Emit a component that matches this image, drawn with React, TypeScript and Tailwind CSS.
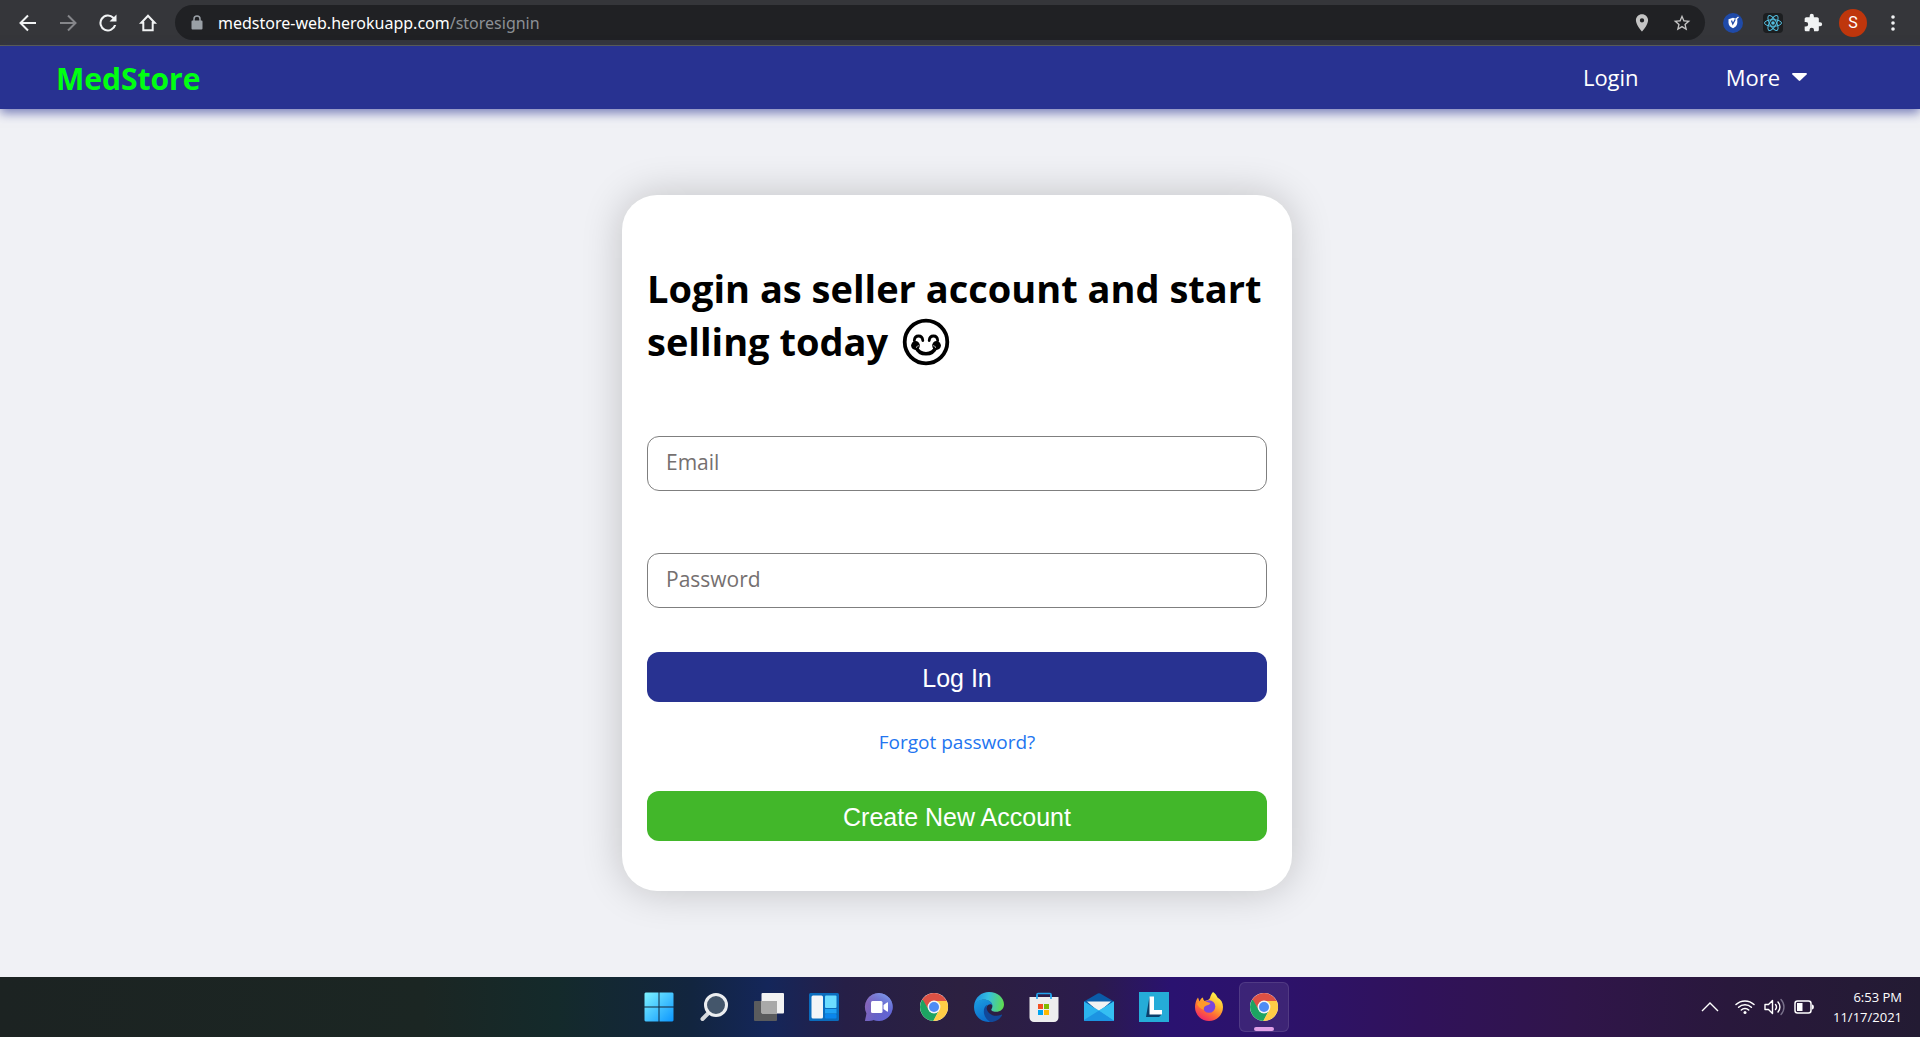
import React from "react";

const SANS = "font-['Open_Sans','Noto_Sans',sans-serif]";

function Toolbar() {
  return (
    <header className="flex h-[46px] items-center border-b border-[#5f6150] bg-[#35363a] pr-[17px] pl-4 text-[#f1f3f4]">
      <nav className="flex items-center gap-2" aria-label="Browser">
        <button aria-label="Back" className="flex w-8 justify-center pr-2">
          <svg width="24" height="24" viewBox="0 0 24 24" className="shrink-0" fill="none" stroke="currentColor" strokeWidth="2">
            <path d="M20 12H5M12 4.500 4.500 12l7.500 7.500" />
          </svg>
        </button>
        <button aria-label="Forward" className="flex w-8 justify-center pr-2 text-[#85868a]">
          <svg width="24" height="24" viewBox="0 0 24 24" className="shrink-0" fill="none" stroke="currentColor" strokeWidth="2">
            <path d="M4 12h15M12 4.500l7.500 7.500-7.500 7.500" />
          </svg>
        </button>
        <button aria-label="Reload" className="flex w-8 justify-center pr-2">
          <svg width="24" height="24" viewBox="0 0 24 24" className="shrink-0" fill="currentColor">
            <path d="M18 6A8.500 8.500 0 1 0 20.200 14h-2.200A6.400 6.400 0 1 1 16.500 7.500L13.500 10.500h7V3.500z" />
          </svg>
        </button>
        <button aria-label="Home" className="flex w-8 justify-center pr-2">
          <svg width="24" height="24" viewBox="0 0 24 24" className="shrink-0" fill="none" stroke="currentColor" strokeWidth="2">
            <path d="M12 4.800 5.300 11.800H7.300V19.200H16.700V11.800H18.700Z" />
          </svg>
        </button>
      </nav>
      <div className="ml-[7px] flex h-[35px] flex-1 items-center rounded-full bg-[#202124] pr-[13px] pl-4">
        <svg width="12" height="16" viewBox="0 0 12 16" className="shrink-0" fill="#9aa0a6">
          <path d="M1.500 5.500h9A1 1 0 0 1 11.500 6.500v7a1 1 0 0 1-1 1h-9a1 1 0 0 1-1-1v-7a1 1 0 0 1 1-1z" />
          <path d="M3 6V4a3 3 0 0 1 6 0v2" fill="none" stroke="#9aa0a6" strokeWidth="1.500" />
        </svg>
        <p className="ml-[15px] flex-1 font-['Noto_Sans','Open_Sans',sans-serif] text-[16px] leading-6 text-white">
          medstore-web.herokuapp.com<span className="text-[#8c9095]">/storesignin</span>
        </p>
        <div className="flex items-center gap-5 text-[#c4c4c4]">
          <button aria-label="Location">
            <svg width="20" height="20" viewBox="0 0 24 24" fill="currentColor">
              <path fillRule="evenodd" d="M12 1.500C7.900 1.500 4.700 4.700 4.700 8.800 4.700 14.300 12 22.500 12 22.500s7.300-8.200 7.300-13.700C19.300 4.700 16.100 1.500 12 1.500zm0 4.700a2.600 2.600 0 1 1 0 5.200 2.600 2.600 0 0 1 0-5.200z" />
            </svg>
          </button>
          <button aria-label="Bookmark">
            <svg width="20" height="20" viewBox="0 0 24 24" fill="currentColor">
              <path d="M22 9.240l-7.190-.62L12 2 9.190 8.630 2 9.240l5.460 4.730L5.820 21 12 17.270 18.180 21l-1.630-7.030L22 9.240zM12 15.400l-3.760 2.270 1-4.280-3.320-2.880 4.380-.38L12 6.100l1.710 4.040 4.380.38-3.320 2.880 1 4.280L12 15.400z" />
            </svg>
          </button>
        </div>
      </div>
      <div className="ml-[18px] flex items-center">
        <button aria-label="Shield">
          <svg width="20" height="20" viewBox="0 0 20 20">
            <circle cx="10" cy="10" r="10" fill="#1f4aa8" />
            <path d="M5.500 6.200 10 4.800l4.300 1.400v3.600c0 2.700-2 4.500-4.300 5.500-2.500-1-4.500-2.800-4.500-5.500z" fill="#fff" />
            <path d="M8.500 7.500l1.300 3.500L12.500 6" fill="none" stroke="#1f4aa8" strokeWidth="1.300" />
            <path d="M12.500 6.500 15.500 4" stroke="#fff" strokeWidth="1.200" />
          </svg>
        </button>
        <button aria-label="React tools" className="ml-5 rounded-sm bg-[#1c1e20]">
          <svg width="20" height="20" viewBox="0 0 20 20" fill="none" stroke="#53bfe0" strokeWidth="1">
            <circle cx="10" cy="10" r="1.800" fill="#53bfe0" stroke="none" />
            <ellipse cx="10" cy="10" rx="8.500" ry="3.300" />
            <ellipse cx="10" cy="10" rx="8.500" ry="3.300" transform="rotate(60 10 10)" />
            <ellipse cx="10" cy="10" rx="8.500" ry="3.300" transform="rotate(120 10 10)" />
          </svg>
        </button>
        <button aria-label="Extensions" className="ml-5">
          <svg width="20" height="20" viewBox="0 0 24 24" fill="currentColor">
            <path d="M20.500 11H19V7c0-1.100-.9-2-2-2h-4V3.500a2.500 2.500 0 0 0-5 0V5H4c-1.100 0-2 .9-2 2v3.800h1.500a2.700 2.700 0 0 1 0 5.400H2V20c0 1.100.9 2 2 2h3.800v-1.500a2.700 2.700 0 0 1 5.400 0V22H17c1.100 0 2-.9 2-2v-4h1.500a2.500 2.500 0 0 0 0-5z" />
          </svg>
        </button>
        <button className="ml-4 flex size-7 items-center justify-center rounded-full bg-[#bf360c] font-[Roboto,sans-serif] text-[16px] leading-6 text-white">S</button>
        <button aria-label="Menu" className="ml-4">
          <svg width="20" height="20" viewBox="0 0 20 20" fill="currentColor">
            <circle cx="10" cy="4" r="1.800" />
            <circle cx="10" cy="10" r="1.800" />
            <circle cx="10" cy="16" r="1.800" />
          </svg>
        </button>
      </div>
    </header>
  );
}

function SiteNav() {
  return (
    <nav className="relative flex h-[63px] items-center justify-between bg-[#283291] pr-[113px] pl-14 shadow-[0_4px_10px_#28329199]">
      <a href="#home" className="pt-[2px] text-[30px] leading-10 font-bold text-[#00ff11]">MedStore</a>
      <div className="flex items-center gap-[87px] pb-[2px] text-[22px] leading-8 text-white">
        <a href="#login">Login</a>
        <button className="flex items-center gap-3">
          More
          <svg width="15" height="8" viewBox="0 0 15 8" fill="currentColor">
            <path d="M1 0h13c.9 0 1.300 1 .6 1.600L8.300 7.600a1.200 1.200 0 0 1-1.600 0L.4 1.600C-.3 1 .1 0 1 0z" />
          </svg>
        </button>
      </div>
    </nav>
  );
}

function Smiley() {
  return (
    <svg width="48" height="48" viewBox="0 0 48 48" className="ml-1 inline-block align-[-10px]" role="img" aria-label="smiling face" fill="none" stroke="#000" strokeLinecap="round">
      <circle cx="24" cy="24" r="21.300" strokeWidth="3.800" />
      <path d="M12.300 22.500c.5-6 8-6 8.500 0M27.200 22.500c.5-6 8-6 8.500 0" strokeWidth="2.800" />
      <path d="M14 29c3.500 9 16.500 9 20 0" strokeWidth="3.600" />
      <circle cx="13.500" cy="27.500" r="4.400" fill="#000" stroke="none" />
      <circle cx="34.500" cy="27.500" r="4.400" fill="#000" stroke="none" />
      <path d="M14.500 29.500c.3-1.500 1.200-2 2.500-1.700M33.500 29.500c-.3-1.500-1.200-2-2.500-1.700" stroke="#fff" strokeWidth=".7" />
    </svg>
  );
}

function LoginCard() {
  return (
    <form
      onSubmit={(e) => e.preventDefault()}
      className="flex w-full max-w-[670px] flex-col rounded-[35px] bg-white px-[25px] pt-[67px] pb-[50px] shadow-[0_0_40px_#00000033]"
    >
      <h1 className="text-[38px] leading-[53px] font-bold text-black">
        Login as seller account and start selling today <Smiley />
      </h1>
      <input
        aria-label="Email"
        type="email"
        placeholder="Email"
        className="mt-[68px] h-[55px] rounded-xl border border-[#7f7f7f] px-[18px] pb-1 text-[21px] leading-7 placeholder:text-[#757070]"
      />
      <input
        aria-label="Password"
        type="password"
        placeholder="Password"
        className="mt-[62px] h-[55px] rounded-xl border border-[#7f7f7f] px-[18px] pb-1 text-[21px] leading-7 placeholder:text-[#757070]"
      />
      <button className="mt-11 h-[50px] rounded-xl bg-[#283291] pt-[2px] font-['Liberation_Sans',Arial,sans-serif] text-[25px] leading-7 text-white">
        Log In
      </button>
      <a href="#forgot" className="mt-[26px] mb-[35px] self-center text-[19px] leading-7 text-[#2375f0]">
        Forgot password?
      </a>
      <button type="button" className="h-[50px] rounded-xl bg-[#42b72a] pt-[2px] font-['Liberation_Sans',Arial,sans-serif] text-[25px] leading-7 text-white">
        Create New Account
      </button>
    </form>
  );
}

function ChromeIcon() {
  return (
    <svg width="30" height="30" viewBox="0 0 30 30">
      <circle cx="15" cy="15" r="14" fill="#fff" />
      <path d="M2.900 8A14 14 0 0 1 27.100 8L27.700 9H15A6 6 0 0 0 9.800 18z" fill="#dd5144" />
      <path d="M2.900 8A14 14 0 0 0 14.500 29L20.200 18A6 6 0 0 1 9.800 18L4 8z" fill="#1da462" />
      <path d="M27.700 9A14 14 0 0 1 14.200 29L20.200 18A6 6 0 0 0 15 9z" fill="#ffcd46" />
      <circle cx="15" cy="15" r="6.400" fill="#f4f4f4" />
      <circle cx="15" cy="15" r="5" fill="#4c8bf5" />
    </svg>
  );
}

const apps: { name: string; active?: boolean; icon: React.ReactNode }[] = [
  {
    name: "Start",
    icon: (
      <svg width="30" height="30" viewBox="0 0 30 30">
        <defs>
          <linearGradient id="win" gradientUnits="userSpaceOnUse" x1="0" y1="0" x2="30" y2="30">
            <stop offset="0" stopColor="#80f4ff" />
            <stop offset="1" stopColor="#0a95ff" />
          </linearGradient>
        </defs>
        <path d="M1.500 .5H14.500V14.500H.5V1.500zM15.500 .5H28.500L29.500 1.500V14.500H15.500zM.5 15.500H14.500V29.500H1.500L.5 28.500zM15.500 15.500H29.500V28.500L28.500 29.500H15.500z" fill="url(#win)" />
      </svg>
    ),
  },
  {
    name: "Search",
    icon: (
      <svg width="30" height="30" viewBox="0 0 30 30">
        <path d="M10 20.500 3.500 27" stroke="#d5d8dc" strokeWidth="4" strokeLinecap="round" />
        <circle cx="17" cy="13" r="10.500" fill="#44566b" stroke="#eceef0" strokeWidth="3" />
      </svg>
    ),
  },
  {
    name: "Task view",
    icon: (
      <svg width="30" height="30" viewBox="0 0 30 30">
        <rect y="9" width="23" height="20" rx="1" fill="#5a5b5d" />
        <rect x="7.500" y="1" width="22.500" height="20.500" rx="1" fill="#f2f2f2" />
        <path d="M7.500 9H23V21.500H8.500a1 1 0 0 1-1-1z" fill="#a9a9a9" />
      </svg>
    ),
  },
  {
    name: "Widgets",
    icon: (
      <svg width="30" height="30" viewBox="0 0 30 30">
        <rect y="1" width="30" height="28" rx="1.500" fill="#0a6cbd" />
        <rect x="2.500" y="3.500" width="11.500" height="23" rx="1.500" fill="#f3f5f7" />
        <rect x="16" y="3.500" width="11.500" height="12.500" rx="1" fill="#6cdcff" />
        <rect x="16" y="17" width="11.500" height="4.500" fill="#1fa2f5" />
        <rect x="16" y="22" width="11.500" height="4.500" rx="1" fill="#0a86ec" />
      </svg>
    ),
  },
  {
    name: "Chat",
    icon: (
      <svg width="30" height="30" viewBox="0 0 30 30">
        <defs>
          <linearGradient id="chat" x1="0" y1="0.300" x2="1" y2="0.700">
            <stop offset="0" stopColor="#a06cb0" />
            <stop offset=".5" stopColor="#6b66c4" />
            <stop offset="1" stopColor="#6468dc" />
          </linearGradient>
          <linearGradient id="chatTop" x1="0.800" y1="0" x2="0.300" y2="1">
            <stop offset="0" stopColor="#86a8f0" stopOpacity=".9" />
            <stop offset=".6" stopColor="#5a58cc" stopOpacity=".3" />
          </linearGradient>
        </defs>
        <path d="M15 1a14 14 0 1 1-5.500 27C7.500 29 4 29.200 1 29l1.500-7.500A14 14 0 0 1 15 1z" fill="url(#chat)" />
        <path d="M15 1a14 14 0 1 1-5.500 27C7.500 29 4 29.200 1 29l1.500-7.500A14 14 0 0 1 15 1z" fill="url(#chatTop)" />
        <rect x="7" y="9" width="11.500" height="12" rx="1.500" fill="#fff" />
        <path d="M19.500 13 23 10.500c.6-.4 1 0 1 .5v8c0 .6-.5.900-1 .5L19.500 17z" fill="#fff" />
      </svg>
    ),
  },
  { name: "Chrome", icon: <ChromeIcon /> },
  {
    name: "Edge",
    icon: (
      <svg width="30" height="30" viewBox="0 0 30 30">
        <defs>
          <linearGradient id="edgeTop" x1="0" y1=".5" x2="1" y2=".6">
            <stop offset="0" stopColor="#1c8fe0" />
            <stop offset=".45" stopColor="#35bfe0" />
            <stop offset="1" stopColor="#60dc4c" />
          </linearGradient>
          <linearGradient id="edgeLeft" x1="0" y1="0" x2=".4" y2="1">
            <stop offset="0" stopColor="#1b9de2" />
            <stop offset="1" stopColor="#0c6dcb" />
          </linearGradient>
        </defs>
        <path d="M0 14C1 5 7.500 0 15 0c9 0 15 6 15 12.500 0 4.500-3.500 7.300-8 7.300-3.500 0-5.300-1.300-4.500-2.800 2-2.500 1-7.500-5-9C7 7 2 9.500 0 14z" fill="url(#edgeTop)" />
        <path d="M0 15C0 10 5 7.500 10 7.500c5 0 8.500 3 8.500 6.500 0-2-3-2.500-4.500-1-4.500 4-1 13.500 5.500 16.300C10 32 0 26 0 15z" fill="url(#edgeLeft)" />
        <path d="M13.500 12.700C8 15 8.500 25 16 29.900c5.500.3 9.500-2.500 12-6.500.3-.6-.2-1-.8-.7C20 26 12.500 21.500 12.500 15z" fill="#11489a" />
      </svg>
    ),
  },
  {
    name: "Microsoft Store",
    icon: (
      <svg width="30" height="30" viewBox="0 0 30 30">
        <path d="M8 6V2.500a1 1 0 0 1 1-1h12a1 1 0 0 1 1 1V6" fill="none" stroke="#22a4ee" strokeWidth="1.600" />
        <path d="M.5 5h29v20.500a4.500 4.500 0 0 1-4.500 4.500H5a4.500 4.500 0 0 1-4.500-4.500z" fill="#ededee" />
        <path d="M8 3v4M22 3v4" stroke="#22a4ee" strokeWidth="1.600" />
        <path d="M9 12h5v5H9z" fill="#f25022" />
        <path d="M15 12h5v5h-5z" fill="#7fba00" />
        <path d="M9 18h5v5H9z" fill="#00a4ef" />
        <path d="M15 18h5v5h-5z" fill="#ffb900" />
      </svg>
    ),
  },
  {
    name: "Mail",
    icon: (
      <svg width="30" height="30" viewBox="0 0 30 30">
        <path d="M0 9.500 13.800 1.500a2.500 2.500 0 0 1 2.400 0L30 9.500V14H0z" fill="#0a5ba8" />
        <path d="M3 9.500h24L15 20z" fill="#f3f3f3" />
        <path d="M0 9.500 15 18.500 30 9.500V28a1 1 0 0 1-1 1H1a1 1 0 0 1-1-1z" fill="#2bb3ee" />
        <path d="M15 18.500 30 28.500a1 1 0 0 1-1 .5H1L0 28z" fill="#1c94e2" />
        <path d="M15 18.500 30 9.500V28.500z" fill="#35bff2" />
      </svg>
    ),
  },
  {
    name: "Lightshot",
    icon: (
      <svg width="30" height="30" viewBox="0 0 30 30">
        <path d="M0 0h30v30H0z" fill="#25acd8" />
        <path d="M10.500 4.500 7 25h13l3-3-10-2z" fill="#0b3f6b" />
        <path d="M10.500 4.500H15V18h8v4.500H10.500z" fill="#fff" />
      </svg>
    ),
  },
  {
    name: "Firefox",
    icon: (
      <svg width="30" height="30" viewBox="0 0 30 30">
        <defs>
          <linearGradient id="fox" x1=".8" y1=".1" x2=".3" y2="1">
            <stop offset="0" stopColor="#fff04a" />
            <stop offset=".35" stopColor="#ffb52e" />
            <stop offset=".65" stopColor="#ff6a36" />
            <stop offset="1" stopColor="#f0246b" />
          </linearGradient>
        </defs>
        <path d="M19 0c2.500 1.500 3.500 3.500 4.500 5.500 3.500 2 5.500 5 5.500 9.500a14 14 0 0 1-28 0c0-3.500 1-7 3-9.500l1.500 4C6.500 7 7.500 6 9 5.500c0 1.500.5 2.500 1.500 3.500C13 8 15 8 16 6c.5-2.500 1.500-4.500 3-6z" fill="url(#fox)" />
        <circle cx="15" cy="14.500" r="6.300" fill="#7a45dc" />
        <path d="M3 12c2-3 5-4 7.500-3 2 .8 3.500 1.500 6 2-1 2-3 2.200-4.500 2.700C10 14.500 9.500 16 10 18c-3-1-6-3-7-6z" fill="#ff9a2a" />
      </svg>
    ),
  },
  { name: "Chrome window", active: true, icon: <ChromeIcon /> },
];

function Taskbar() {
  return (
    <footer className="grid h-[60px] grid-cols-[1fr_auto_1fr] items-center bg-[linear-gradient(90deg,#1c2322_0%,#1b2623_22%,#142a2b_29%,#12253f_36%,#14265a_40%,#261f47_44%,#2c2040_50%,#2b1b4c_57%,#2a1270_61%,#2d126a_67%,#30125a_74%,#30154a_82%,#29183c_90%,#231b33_100%)] pl-[3px]">
      <span />
      <div className="flex gap-[5px]">
        {apps.map((app) => (
          <button
            key={app.name}
            aria-label={app.name}
            className={
              app.active
                ? "relative flex size-[50px] items-center justify-center rounded-md border border-white/10 bg-white/8"
                : "flex size-[50px] items-center justify-center"
            }
          >
            {app.icon}
            {app.active && <span className="absolute bottom-0 h-1 w-5 rounded-full bg-[#e0a0e6]" />}
          </button>
        ))}
      </div>
      <div className="flex items-center justify-end pr-[18px] text-white">
        <button aria-label="Hidden icons">
          <svg width="18" height="10" viewBox="0 0 18 10" fill="none" stroke="currentColor" strokeWidth="1.400">
            <path d="M1 9 9 1l8 8" />
          </svg>
        </button>
        <button aria-label="System status" className="ml-4 flex items-center gap-[9px]">
          <svg width="20" height="16" viewBox="0 0 20 16" fill="none" stroke="currentColor" strokeWidth="1.500" strokeLinecap="round">
            <path d="M1 5.500a13 13 0 0 1 18 0M3.600 8.300a9.200 9.200 0 0 1 12.800 0M6.300 11a5.300 5.300 0 0 1 7.400 0" />
            <circle cx="10" cy="13.500" r="1.500" fill="currentColor" stroke="none" />
          </svg>
          <svg width="21" height="18" viewBox="0 0 21 18" fill="none" stroke="currentColor" strokeWidth="1.400" strokeLinecap="round" strokeLinejoin="round">
            <path d="M1 6.500v5h3.500l4 4v-13l-4 4z" />
            <path d="M11.500 6.500a4 4 0 0 1 0 5M14 4a7.500 7.500 0 0 1 0 10" />
            <path d="M17 1.500a11 11 0 0 1 0 15" stroke="#78708a" />
          </svg>
          <svg width="21" height="14" viewBox="0 0 21 14" fill="none" stroke="currentColor" strokeWidth="1.500">
            <rect x="1" y="1" width="16" height="12" rx="2.500" />
            <path d="M3 3h5.500v8H3z" fill="currentColor" stroke="none" />
            <path d="M18 4.500c2.500 0 2.500 5 0 5z" fill="currentColor" stroke="none" />
          </svg>
        </button>
        <time className="ml-[18px] text-right text-[13px] leading-5">
          6:53 PM
          <br />
          11/17/2021
        </time>
      </div>
    </footer>
  );
}

export default function App() {
  return (
    <div className={`flex min-h-screen flex-col bg-[#f0f1f5] ${SANS}`}>
      <Toolbar />
      <SiteNav />
      <main className="flex flex-1 items-center justify-center pr-[6px]">
        <LoginCard />
      </main>
      <Taskbar />
    </div>
  );
}
